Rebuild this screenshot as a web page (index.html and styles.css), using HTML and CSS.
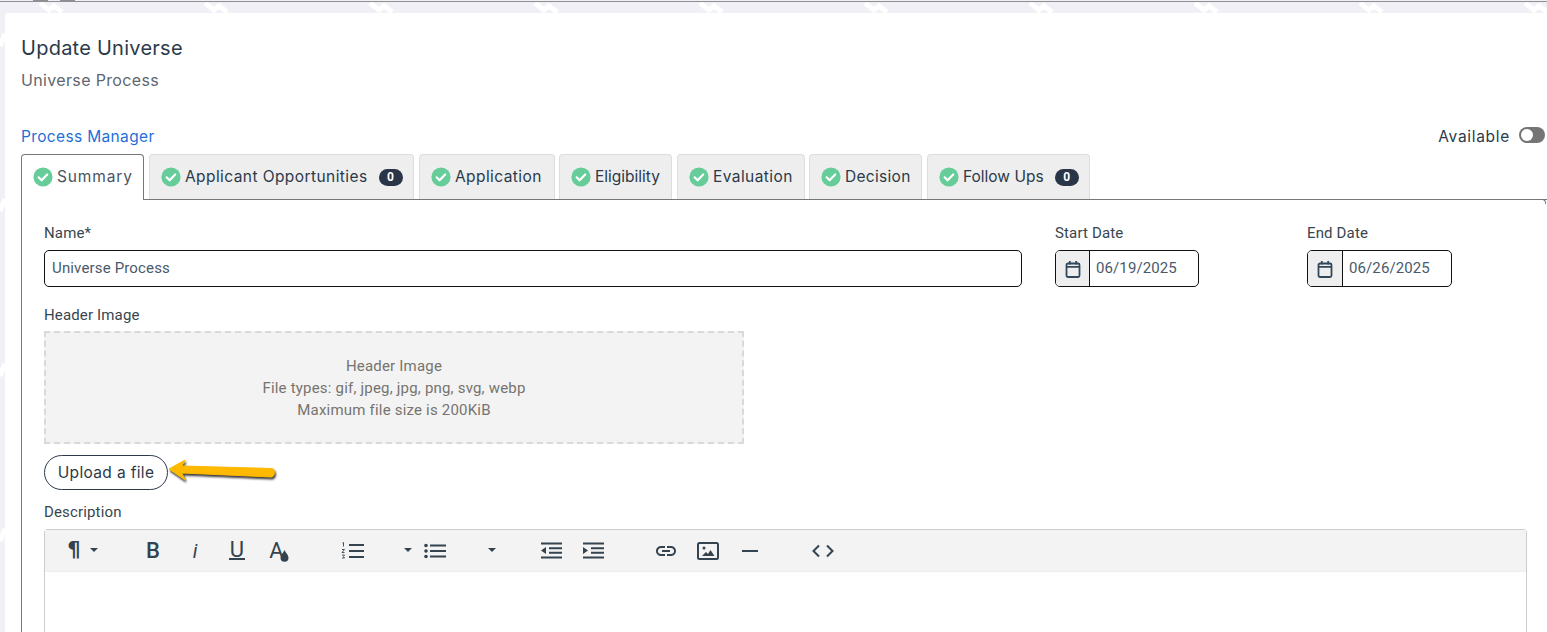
FILE: index.html
```html
<!DOCTYPE html>
<html lang="en">
<head>
<meta charset="utf-8">
<title>Update Universe</title>
<link rel="stylesheet" href="styles.css">
</head>
<body>
<svg class="defs" width="0" height="0" aria-hidden="true">
  <symbol id="ok" viewBox="0 0 20 20"><circle cx="10" cy="10" r="9.6" fill="#66cc99"/><path d="M5.600 10.300l3 3 5.600-5.800" fill="none" stroke="#fff" stroke-width="2.200" stroke-linecap="round" stroke-linejoin="round"/></symbol>
  <symbol id="cal" viewBox="0 0 16 18"><rect x="1.500" y="3.500" width="13" height="13.500" rx="1.500" fill="none" stroke="#33475b" stroke-width="1.800"/><path d="M1.500 6.800h13" stroke="#33475b" stroke-width="1.800"/><path d="M4.800 1v3.500M11.200 1v3.500" stroke="#33475b" stroke-width="1.800"/></symbol>
</svg>
<div class="topbar"><span class="stub"></span><span class="stub"></span></div>
<main class="card">
  <h1 class="title">Update Universe</h1>
  <p class="subtitle">Universe Process</p>
  <div class="meta">
    <a class="manager" href="#">Process Manager</a>
    <div class="avail"><span>Available</span><span class="toggle"><span class="knob"></span></span></div>
  </div>
  <nav class="tabs">
    <a class="tab active t-sum"><svg class="ok"><use href="#ok"/></svg>Summary</a>
    <a class="tab t-app"><svg class="ok"><use href="#ok"/></svg>Applicant Opportunities<span class="badge">0</span></a>
    <a class="tab t-apl"><svg class="ok"><use href="#ok"/></svg>Application</a>
    <a class="tab t-eli"><svg class="ok"><use href="#ok"/></svg>Eligibility</a>
    <a class="tab t-eva"><svg class="ok"><use href="#ok"/></svg>Evaluation</a>
    <a class="tab t-dec"><svg class="ok"><use href="#ok"/></svg>Decision</a>
    <a class="tab t-fol"><svg class="ok"><use href="#ok"/></svg>Follow Ups<span class="badge">0</span></a>
  </nav>
  <section class="panel">
    <div class="row">
      <div class="field f-name">
        <label class="label">Name*</label>
        <div class="input">Universe Process</div>
      </div>
      <div class="field f-start">
        <label class="label">Start Date</label>
        <div class="date"><span class="addon"><svg class="cal"><use href="#cal"/></svg></span><span class="dval">06/19/2025</span></div>
      </div>
      <div class="field f-end">
        <label class="label">End Date</label>
        <div class="date"><span class="addon"><svg class="cal"><use href="#cal"/></svg></span><span class="dval">06/26/2025</span></div>
      </div>
    </div>
    <label class="label hdr-label">Header Image</label>
    <div class="drop">
      <div>Header Image</div>
      <div>File types: gif, jpeg, jpg, png, svg, webp</div>
      <div>Maximum file size is 200KiB</div>
    </div>
    <div class="upload-row">
      <button class="upload">Upload a file</button>
      <svg class="arrow" width="112" height="28" viewBox="0 0 112 28">
        <path d="M1 12L17 3l-3 6 90 2.500c3.500.3 3 8.500-.5 8.500L14 16l3 7z" fill="#ffb900" stroke="#ffb900" stroke-linejoin="round"/>
      </svg>
    </div>
    <label class="label desc-label">Description</label>
    <div class="editor">
      <div class="toolbar">
        <span class="tb w-para"><span class="glyph pil">¶</span><span class="caret c-para"></span></span>
        <span class="tb w-b"><span class="glyph bold">B</span></span>
        <span class="tb w-b"><span class="glyph ital">i</span></span>
        <span class="tb w-b"><span class="glyph under">U</span></span>
        <span class="tb w-b"><span class="glyph fill">A<svg class="drop-i" width="9" height="12" viewBox="0 0 9 12"><path d="M4.500 0C3.500 2.500 .5 5 .5 7.800a4 4 0 0 0 8 0C8.500 5 5.500 2.500 4.500 0z" fill="#33434f"/></svg></span></span>
        <span class="tb w-ol">
          <svg width="24" height="18" viewBox="0 0 24 18"><path d="M8 3h15M8 9h15M8 15h15" stroke="#33434f" stroke-width="2.200"/><path d="M1.500 1l1-.5v4M1 7.500h2.500l-2.500 3h2.500M1 13h2.500l-1 1.500 1 1.500H1" fill="none" stroke="#33434f" stroke-width=".9"/></svg>
          <span class="caret c-ol"></span>
        </span>
        <span class="tb w-ul">
          <svg width="22" height="16" viewBox="0 0 22 16"><path d="M6 2.500h16M6 8h16M6 13.500h16" stroke="#33434f" stroke-width="2"/><circle cx="2" cy="2.500" r="1.800" fill="#33434f"/><circle cx="2" cy="8" r="1.800" fill="#33434f"/><circle cx="2" cy="13.500" r="1.800" fill="#33434f"/></svg>
          <span class="caret c-ul"></span>
        </span>
        <span class="tb w-b g-in"><svg width="21" height="17" viewBox="0 0 21 17"><path d="M0 1.500h21M8 6.300h13M8 10.700h13M0 15.500h21" stroke="#33434f" stroke-width="2"/><path d="M5 5v7L0 8.500z" fill="#33434f"/></svg></span>
        <span class="tb w-b"><svg width="21" height="17" viewBox="0 0 21 17"><path d="M0 1.500h21M8 6.300h13M8 10.700h13M0 15.500h21" stroke="#33434f" stroke-width="2"/><path d="M0 5v7l5-3.500z" fill="#33434f"/></svg></span>
        <span class="tb w-b g-link"><svg width="24" height="24" viewBox="0 0 24 24"><path d="M3.900 12c0-1.710 1.390-3.100 3.100-3.100h4V7H7c-2.760 0-5 2.240-5 5s2.240 5 5 5h4v-1.900H7c-1.710 0-3.100-1.390-3.100-3.100zM8 13h8v-2H8v2zm9-6h-4v1.900h4c1.710 0 3.100 1.390 3.100 3.100s-1.390 3.100-3.100 3.100h-4V17h4c2.760 0 5-2.240 5-5s-2.240-5-5-5z" fill="#33434f"/></svg></span>
        <span class="tb w-b"><svg width="22" height="18" viewBox="0 0 22 18"><rect x="1" y="1" width="20" height="16" rx="1.500" fill="none" stroke="#33434f" stroke-width="2"/><circle cx="7" cy="6" r="1.500" fill="#33434f"/><path d="M5 14l4-4 2 2 2.500-4 4 6z" fill="#33434f"/></svg></span>
        <span class="tb w-b"><svg width="16" height="2" viewBox="0 0 16 2"><path d="M0 1h16" stroke="#33434f" stroke-width="2"/></svg></span>
        <span class="tb w-b g-link"><svg width="22" height="14" viewBox="0 0 22 14"><path d="M7 1.500L1.500 7 7 12.500M15 1.500L20.500 7 15 12.500" fill="none" stroke="#33434f" stroke-width="2"/></svg></span>
      </div>
    </div>
  </section>
</main>
</body>
</html>
```
FILE: styles.css
```css
* { box-sizing: border-box; }
html, body { height: 632px; overflow: hidden; }
body {
  margin: 0;
  background-color: #f0f0f6;
  background-image: url("data:image/svg+xml,%3Csvg xmlns='http://www.w3.org/2000/svg' width='165' height='165'%3E%3Cpath d='M40 3l9 7 5-4 8 6' fill='none' stroke='%23fff' stroke-width='5'/%3E%3Cpath d='M0 46l5-12' fill='none' stroke='%23fff' stroke-width='5'/%3E%3C/svg%3E");
  font-family: "Roboto", "Liberation Sans", sans-serif;
  color: #2b3a4a;
}
.defs { position: absolute; }
.topbar {
  height: 2px;
  border-bottom: 1px solid #8f8f8f;
  display: flex;
  gap: 12px;
  padding-left: 33px;
}
.stub { width: 15px; height: 1px; background: #8a8f99; }
.card {
  margin: 11px 0 0 5px;
  height: 619px;
  overflow: hidden;
  background: #fff;
  border-radius: 4px 0 0 0;
  padding: 22px 0 0 16px;
}
.title {
  margin: 0;
  font: 400 20px/26px "Inter", "Open Sans", sans-serif;
  letter-spacing: .25px;
  color: #2b3a4a;
}
.subtitle {
  margin: 8px 0 0;
  font: 400 16px/22px "Inter", "Open Sans", sans-serif;
  letter-spacing: .35px;
  color: #5f6670;
}
.meta {
  display: flex;
  justify-content: space-between;
  align-items: center;
  margin-top: 35px;
  height: 22px;
  padding-right: 2px;
  font: 400 15.500px/22px "Inter", "Open Sans", sans-serif;
  letter-spacing: .35px;
}
.manager { color: #1f6fd6; text-decoration: none; }
.avail { display: flex; align-items: center; gap: 9px; color: #2b3a4a; letter-spacing: .7px; }
.toggle {
  width: 26px; height: 16px; border-radius: 8px;
  background: #757575; padding: 2px; display: block;
  margin-top: -4px;
}
.knob { display: block; width: 12px; height: 12px; border-radius: 50%; background: #fff; }
.tabs {
  display: flex;
  gap: 5px;
  margin-top: 6px;
  height: 46px;
  position: relative;
  z-index: 1;
  font: 400 15.500px/20px "Inter", "Open Sans", sans-serif;
  letter-spacing: .42px;
}
.tab {
  display: flex;
  align-items: center;
  height: 45px;
  padding: 0 0 0 11px;
  gap: 4px;
  background: #eeeeee;
  border: 1px solid #dddddd;
  border-bottom: 0;
  border-radius: 4px 4px 0 0;
  color: #2b3a4a;
  white-space: nowrap;
}
.tab.active {
  height: 46px;
  padding-bottom: 1px;
  background: #fff;
  border-color: #777;
  color: #4a5561;
}
.t-sum { width: 123px; letter-spacing: .85px; }
.t-app { width: 265px; }
.t-apl { width: 136px; }
.t-eli { width: 113px; margin-left: -1px; letter-spacing: 0; }
.t-eva { width: 128px; }
.t-dec { width: 113px; margin-left: -1px; letter-spacing: .3px; }
.t-fol { width: 163px; letter-spacing: 0; }
.ok { width: 20px; height: 20px; flex: none; }
.badge {
  margin-left: 7px;
  width: 24px; height: 17px;
  border-radius: 9px;
  background: #2a3547;
  color: #fff;
  font: 700 12px/17px "Roboto", sans-serif;
  letter-spacing: 0;
  text-align: center;
}
.panel {
  margin-top: -1px;
  height: 433px;
  border: 1px solid #777;
  border-right: 0;
  border-bottom: 0;
  padding: 24px 20px 0 22px;
  position: relative;
}
.panel::after {
  content: "";
  position: absolute;
  top: -1px; right: 1px;
  width: 4px; height: 4px;
  border-top: 1px solid #777;
  border-right: 1px solid #777;
  border-radius: 0 4px 0 0;
}
.row { display: flex; }
.label {
  display: block;
  font-size: 15px;
  letter-spacing: .15px;
  line-height: 18px;
  color: #37464f;
}
.field .label { margin-bottom: 8px; }
.f-name { width: 1011px; }
.f-name .input { width: 978px; }
.f-start { width: 252px; }
.f-end { width: 145px; }
.input, .date {
  height: 37px;
  border: 1px solid #111;
  border-radius: 5px;
  font-size: 15px;
  color: #4a5a6a;
}
.input { padding: 0 7px; line-height: 33px; letter-spacing: .15px; padding-top: 1px; }
.date { display: flex; width: 144px; overflow: hidden; }
.f-end .date { width: 145px; }
.addon {
  width: 34px;
  flex: none;
  background: #eeeeee;
  border-right: 1px solid #111;
  display: flex;
  align-items: center;
  justify-content: center;
  padding-top: 1px;
}
.f-end .addon { width: 35px; }
.cal { width: 16px; height: 18px; }
.dval { padding: 1px 0 0 6px; line-height: 33px; letter-spacing: .1px; white-space: nowrap; }
.hdr-label { margin-top: 19px; }
.drop {
  width: 700px;
  height: 113px;
  margin-top: 7px;
  background: #f3f3f3;
  border: 2px dashed #d9d9d9;
  display: flex;
  flex-direction: column;
  align-items: center;
  justify-content: center;
  font-size: 15px;
  letter-spacing: .2px;
  line-height: 22px;
  color: #76746f;
}
.upload-row { display: flex; align-items: center; margin-top: 11px; height: 35px; }
.upload {
  width: 124px; height: 35px;
  border: 1px solid #2b3a4a;
  border-radius: 18px;
  background: #fff;
  color: #2b3a4a;
  font: 400 15.500px/20px "Inter", "Open Sans", sans-serif;
  letter-spacing: .35px;
  padding: 0;
}
.arrow { flex: none; margin: -4px 0 0 0; filter: drop-shadow(1px 2px 1.200px #333); }
.desc-label { margin-top: 13px; }
.editor {
  margin-top: 8px;
  width: 1483px;
  height: 103px;
  border: 1px solid #cccccc;
  border-bottom: 0;
  border-radius: 4px 4px 0 0;
}
.toolbar {
  display: flex;
  align-items: center;
  height: 42px;
  background: #f3f3f3;
  border-bottom: 1px solid #eeeeee;
  padding-left: 8px;
}
.tb {
  display: flex;
  align-items: center;
  justify-content: center;
  height: 100%;
  flex: none;
  position: relative;
  color: #33434f;
}
.w-b { width: 42px; }
.w-para { width: 79px; }
.w-ol { width: 90px; justify-content: flex-start; padding-left: 9px; margin-left: 32px; }
.w-ul { width: 83px; justify-content: flex-start; padding-left: 2px; }
.g-in { margin-left: 25px; }
.g-link { margin-left: 31px; }
.glyph { font-size: 20px; line-height: 1; position: relative; }
.pil { font-family: "DejaVu Sans", sans-serif; font-weight: 700; font-size: 21px; margin-right: 37px; }
.bold { font-weight: 500; font-size: 22px; }
.ital { font-style: italic; font-size: 20px; }
.under { border-bottom: 2px solid #33434f; line-height: 17px; font-size: 22px; padding: 0 1px; }
.fill { padding-right: 5px; font-size: 22px; }
.drop-i { position: absolute; right: 0; bottom: 0; }
.caret {
  width: 0; height: 0;
  border-left: 4px solid transparent;
  border-right: 4px solid transparent;
  border-top: 4px solid #33434f;
  position: absolute;
}
.c-para { left: 37px; top: 18px; }
.c-ol { left: 72px; top: 18px; }
.c-ul { left: 66px; top: 18px; }
```
